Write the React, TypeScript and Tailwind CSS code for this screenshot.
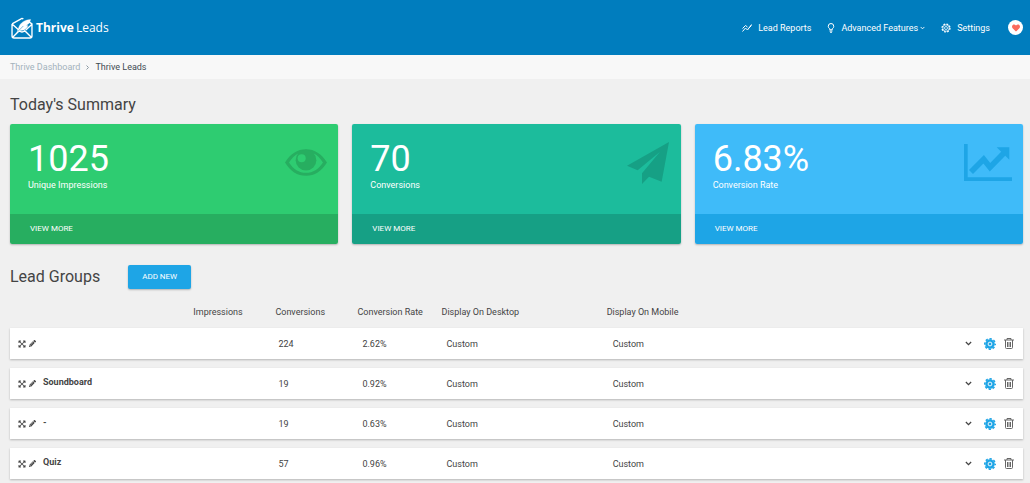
import React from "react";
import { FaExpandArrowsAlt, FaHeart, FaPencilAlt } from "react-icons/fa";

const groups = [
  { name: "", conversions: "224", rate: "2.62%", desktop: "Custom", mobile: "Custom" },
  { name: "Soundboard", conversions: "19", rate: "0.92%", desktop: "Custom", mobile: "Custom" },
  { name: "-", conversions: "19", rate: "0.63%", desktop: "Custom", mobile: "Custom" },
  { name: "Quiz", conversions: "57", rate: "0.96%", desktop: "Custom", mobile: "Custom" },
];

const Logo = () => (
  <svg viewBox="0 0 64 64" className="h-[22px] w-[22px]" fill="none" stroke="#fff" strokeWidth="4">
    <path d="M3 20v35q0 6 6 6h46q6 0 6-6V20L46 10M3 20L28 6q4-3 8 0M4 21l21 19M61 21L43 38M5 59l19-19q8 7 16 0l19 19" />
    <path
      d="M57 7C40 9 26 16 22 32l-5 14 9-7c15 1 21-7 23-14l-5 0 8-6C55 16 56 11 57 7z"
      fill="#fff"
      stroke="#fff"
      strokeWidth="1"
    />
    <path d="M20 42L36 26" stroke="#007dbe" strokeWidth="1.500" />
  </svg>
);

const ReportsIcon = () => (
  <svg viewBox="0 0 20 20" className="h-[10px] w-[10px]" fill="none" stroke="currentColor" strokeWidth="2">
    <path d="M1 17l6-7 4 4 8-11M1 11l6-6 4 3M14 10l5-5" />
  </svg>
);

const BulbIcon = () => (
  <svg viewBox="0 0 16 20" className="h-[10px] w-[8px]" fill="none" stroke="currentColor" strokeWidth="2">
    <path d="M5.500 13.500v-2C3.500 10.500 2.500 8.500 2.500 6.500a5.500 5.500 0 0 1 11 0c0 2-1 4-3 5v2z" />
    <path d="M5 16h6M6 18.500h4" />
  </svg>
);

const GearOutlineIcon = () => (
  <svg viewBox="0 0 20 20" className="h-[10px] w-[10px]" fill="none" stroke="currentColor">
    <circle cx="10" cy="10" r="8" strokeWidth="2.500" strokeDasharray="3.600 2.683" />
    <circle cx="10" cy="10" r="6.500" strokeWidth="1.500" />
    <circle cx="10" cy="10" r="3" strokeWidth="1.500" />
  </svg>
);

const ChevronIcon = ({ className }: { className: string }) => (
  <svg viewBox="0 0 12 8" className={className} fill="none" stroke="currentColor" strokeWidth="2.200">
    <path d="M1.500 1.500L6 6l4.500-4.500" />
  </svg>
);

const EyeIcon = () => (
  <svg viewBox="0 0 126 80" className="mt-[25px] h-[27px] w-[42px]">
    <path
      fillRule="evenodd"
      d="M0 40C16 14 37 0 63 0s47 14 63 40C110 66 89 80 63 80S16 66 0 40zM12 40c13 20 30 31 51 31s38-11 51-31C104 25 96 18 88 14H38C29 19 21 27 12 40z"
    />
    <circle cx="63" cy="33" r="31" />
    <circle cx="50" cy="27" r="12" fill="#2ecc71" />
  </svg>
);

const PlaneIcon = () => (
  <svg viewBox="0 0 126 126" className="mr-px mt-[18px] h-[42px] w-[42px]">
    <path d="M126 0L0 71l32 14 67-56-54 65v32l21-22 38 15z" />
  </svg>
);

const ChartIcon = () => (
  <svg viewBox="0 0 144 111" className="mt-[20px] h-[37px] w-[48px]">
    <path d="M0 0h11v100h133v11H0z" />
    <path d="M21 84l38-38 19 24 44-45" fill="none" stroke="currentColor" strokeWidth="17" />
    <path d="M98 10h38v37z" />
  </svg>
);

const GearIcon = () => (
  <svg viewBox="0 0 24 24" className="h-3 w-3" fill="none" stroke="#1ea5e6">
    <circle cx="12" cy="12" r="10.500" strokeWidth="3" strokeDasharray="4.600 3.647" strokeDashoffset="2.300" />
    <circle cx="12" cy="12" r="9" fill="#1ea5e6" strokeWidth="1" />
    <circle cx="12" cy="12" r="3.800" stroke="#fff" strokeWidth="1.800" />
  </svg>
);

const TrashIcon = () => (
  <svg viewBox="0 0 20 22" className="h-[11px] w-[10px]" fill="none" stroke="#666" strokeWidth="2">
    <path d="M0 4h20M6 4V1h8v3M3 4v15q0 2 2 2h10q2 0 2-2V4M7 8v10M10 8v10M13 8v10" />
  </svg>
);

const cards = [
  {
    value: "1025",
    label: "Unique Impressions",
    icon: <EyeIcon />,
    body: "bg-[#2ecc71] text-[#27ae60]",
    footer: "bg-[#27ae60]",
  },
  {
    value: "70",
    label: "Conversions",
    icon: <PlaneIcon />,
    body: "bg-[#1cbc9c] text-[#16a085]",
    footer: "bg-[#16a085]",
  },
  {
    value: "6.83%",
    label: "Conversion Rate",
    icon: <ChartIcon />,
    body: "bg-[#3fbbf9] text-[#1ea5e6]",
    footer: "bg-[#1ea5e6]",
  },
];

const Header = () => (
  <header className="flex h-[55px] items-center justify-between bg-[#007dbe] pl-[11px] pr-[7px] text-white">
    <a href="#" className="flex items-center gap-[3px] font-['Open_Sans',sans-serif] text-[12px]">
      <Logo />
      <span className="flex gap-[2px]">
        <b>Thrive</b>
        <span>Leads</span>
      </span>
    </a>
    <nav className="flex items-center">
      <a href="#" className="flex items-center gap-[6px]">
        <ReportsIcon />
        Lead Reports
      </a>
      <button className="ml-4 flex items-center">
        <BulbIcon />
        <span className="ml-[6px]">Advanced Features</span>
        <ChevronIcon className="ml-[2px] h-[4px] w-[5px]" />
      </button>
      <a href="#" className="ml-4 flex items-center gap-[6px]">
        <GearOutlineIcon />
        Settings
      </a>
      <button aria-label="Favorites" className="ml-[18px] flex h-[15px] w-[15px] items-center justify-center rounded-full bg-white">
        <FaHeart className="h-2 w-2 text-[#fb6a5d]" />
      </button>
    </nav>
  </header>
);

export default function App() {
  return (
    <div className="min-h-screen bg-[#f0f0f0] font-[Roboto,sans-serif] text-[9px] leading-3 text-[#444]">
      <Header />

      {/* Breadcrumb */}
      <div className="flex h-6 items-center bg-[#f8f8f8] pl-[10px]">
        <a href="#" className="text-[#a3b2bc]">Thrive Dashboard</a>
        <svg viewBox="0 0 6 10" className="ml-[6px] h-[5px] w-[3px]" fill="none" stroke="#8a99a3" strokeWidth="2">
          <path d="M1 1l4 4-4 4" />
        </svg>
        <span className="ml-[6px] text-[#3f4a52]">Thrive Leads</span>
      </div>

      <main className="pl-[10px] pr-[7px]">
        <h1 className="pt-4 text-[16px] leading-5">Today's Summary</h1>

        {/* Summary cards */}
        <div className="mt-[9px] grid grid-cols-3 gap-[14px]">
          {cards.map((card) => (
            <section key={card.label} className="overflow-hidden rounded-[2px] shadow-[0_1px_2px_rgba(0,0,0,0.25)]">
              <div className={`flex h-[90px] justify-between pl-[18px] pr-[11px] fill-current ${card.body}`}>
                <div className="pt-[17px] text-white">
                  <p className="text-[36px] leading-9">{card.value}</p>
                  <p className="mt-[2px]">{card.label}</p>
                </div>
                {card.icon}
              </div>
              <a href="#" className={`flex h-[30px] items-center pl-5 text-[8px] text-white ${card.footer}`}>
                VIEW MORE
              </a>
            </section>
          ))}
        </div>

        {/* Lead groups */}
        <div className="mt-[21px] flex items-center gap-7">
          <h2 className="text-[16px] leading-5">Lead Groups</h2>
          <button className="h-6 rounded-[2px] bg-[#1ea5e6] px-[14px] text-[8px] text-white shadow-[0_1px_2px_rgba(0,0,0,0.25)]">
            ADD NEW
          </button>
        </div>

        <table className="mt-[7px] w-full table-fixed border-separate border-spacing-x-0 border-spacing-y-[9px] text-left">
          <thead>
            <tr className="h-[14px]">
              <th className="w-[18.1%] p-0"></th>
              <th className="w-[8.1%] p-0 font-normal">Impressions</th>
              <th className="w-[8.1%] p-0 font-normal">Conversions</th>
              <th className="w-[8.3%] p-0 font-normal">Conversion Rate</th>
              <th className="w-[16.3%] p-0 font-normal">Display On Desktop</th>
              <th className="p-0 font-normal">Display On Mobile</th>
              <th className="w-[10%] p-0"></th>
            </tr>
          </thead>
          <tbody>
            {groups.map((group, i) => (
              <tr key={i} className="h-[31px] bg-white shadow-[0_1px_2px_rgba(0,0,0,0.25)]">
                <td className="p-0 pl-2">
                  <div className="flex items-center gap-[3px]">
                    <button aria-label="Move">
                      <FaExpandArrowsAlt className="h-2 w-2" />
                    </button>
                    <button aria-label="Edit">
                      <FaPencilAlt className="h-[7px] w-[7px]" />
                    </button>
                    <b className="mb-1 ml-1">{group.name}</b>
                  </div>
                </td>
                <td className="p-0"></td>
                <td className="p-0 pl-[3px]">{group.conversions}</td>
                <td className="p-0 pl-[5px]">{group.rate}</td>
                <td className="p-0 pl-[5px]">{group.desktop}</td>
                <td className="p-0 pl-[6px]">{group.mobile}</td>
                <td className="p-0 pr-[9px]">
                  <div className="flex items-center justify-end">
                    <button aria-label="Expand">
                      <ChevronIcon className="h-[5px] w-[7px]" />
                    </button>
                    <button aria-label="Settings" className="ml-3">
                      <GearIcon />
                    </button>
                    <button aria-label="Delete" className="ml-2">
                      <TrashIcon />
                    </button>
                  </div>
                </td>
              </tr>
            ))}
          </tbody>
        </table>
      </main>
    </div>
  );
}
